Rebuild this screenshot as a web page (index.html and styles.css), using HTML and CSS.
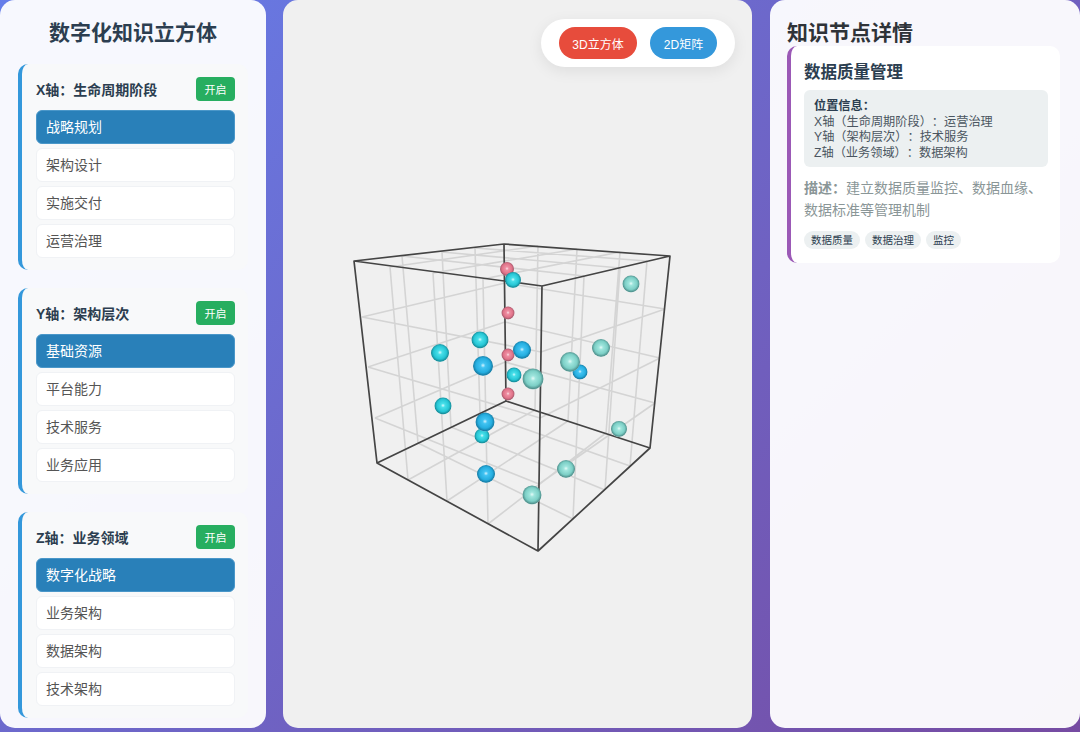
FILE: index.html
```html
<!DOCTYPE html>
<html lang="zh-CN">
<head>
    <meta charset="UTF-8">
    <meta name="viewport" content="width=device-width, initial-scale=1.0">
    <title>数字化知识立方体</title>
    <link rel="stylesheet" href="styles.css">
</head>
<body>
    <div class="container">
        <div class="panel left">
            <h1>数字化知识立方体</h1>
            <div class="axis">
                <div class="axis-head">
                    <span>X轴：生命周期阶段</span>
                    <button class="toggle">开启</button>
                </div>
                <div class="item active">战略规划</div>
                <div class="item">架构设计</div>
                <div class="item">实施交付</div>
                <div class="item">运营治理</div>
            </div>
            <div class="axis">
                <div class="axis-head">
                    <span>Y轴：架构层次</span>
                    <button class="toggle">开启</button>
                </div>
                <div class="item active">基础资源</div>
                <div class="item">平台能力</div>
                <div class="item">技术服务</div>
                <div class="item">业务应用</div>
            </div>
            <div class="axis">
                <div class="axis-head">
                    <span>Z轴：业务领域</span>
                    <button class="toggle">开启</button>
                </div>
                <div class="item active">数字化战略</div>
                <div class="item">业务架构</div>
                <div class="item">数据架构</div>
                <div class="item">技术架构</div>
            </div>
        </div>

        <div class="panel center">
            <svg class="cube" viewBox="283 0 469 728">
                <defs>
                    <radialGradient id="ball-pink" cx="0.5" cy="0.47" r="0.55">
                        <stop offset="0" stop-color="#fbe3e8"/>
                        <stop offset="0.22" stop-color="#ee8ea2"/>
                        <stop offset="0.65" stop-color="#e07389"/>
                        <stop offset="0.88" stop-color="#a85a6e"/>
                        <stop offset="1" stop-color="#d8afba"/>
                    </radialGradient>
                    <radialGradient id="ball-cyan" cx="0.5" cy="0.47" r="0.55">
                        <stop offset="0" stop-color="#d8fbff"/>
                        <stop offset="0.22" stop-color="#48dfe9"/>
                        <stop offset="0.65" stop-color="#26c6d5"/>
                        <stop offset="0.88" stop-color="#178f9c"/>
                        <stop offset="1" stop-color="#96d3d9"/>
                    </radialGradient>
                    <radialGradient id="ball-blue" cx="0.5" cy="0.47" r="0.55">
                        <stop offset="0" stop-color="#d5f3ff"/>
                        <stop offset="0.22" stop-color="#42c3f2"/>
                        <stop offset="0.65" stop-color="#25aee0"/>
                        <stop offset="0.88" stop-color="#177fa8"/>
                        <stop offset="1" stop-color="#96cbe0"/>
                    </radialGradient>
                    <radialGradient id="ball-teal" cx="0.5" cy="0.47" r="0.55">
                        <stop offset="0" stop-color="#e6fbf8"/>
                        <stop offset="0.22" stop-color="#9fe5dd"/>
                        <stop offset="0.65" stop-color="#7ccfc6"/>
                        <stop offset="0.88" stop-color="#529490"/>
                        <stop offset="1" stop-color="#b6d8d4"/>
                    </radialGradient>
                </defs>

                <!-- grid on the six faces -->
                <path class="grid" d="M362 317L541 352M368 367L540 418M375 418L539 484
                    M362 317L505 283M368 367L505 322M375 418L505 362
                    M505 283L665 309M505 322L660 358M505 362L655 403
                    M541 352L665 309M540 418L660 358M539 484L655 403
                    M390 267L408 480M433 273L447 501M483 279L488 524
                    M584 276L573 519M620 268L605 490M647 261L630 466
                    M402 256L418 443M442 252L451 427M475 248L480 413
                    M538 246L535 410M577 249L568 421M620 252L606 433
                    M402 256L584 276M442 252L620 268M475 248L647 261
                    M390 267L538 246M433 273L577 249M483 279L620 252
                    M418 443L573 519M451 427L605 490M480 413L630 466
                    M408 480L535 410M447 501L568 421M488 524L606 433"/>

                <!-- cube edges -->
                <path class="edge" d="M354 261L504 244L670 256L542 286Z
                    M377 463L506 401L650 448L538 551Z
                    M354 261L377 463M504 244L506 401M670 256L650 448M542 286L538 551"/>

                <g class="nodes-pink">
                    <circle cx="507" cy="269" r="7"/>
                    <circle cx="508" cy="313" r="6.5"/>
                    <circle cx="508" cy="355" r="6.5"/>
                    <circle cx="508" cy="394" r="6.5"/>
                </g>
                <g class="nodes-cyan">
                    <circle cx="513" cy="280" r="8"/>
                    <circle cx="480" cy="340" r="8.5"/>
                    <circle cx="440" cy="353" r="9"/>
                    <circle cx="514" cy="375" r="7.5"/>
                    <circle cx="443" cy="406" r="8.5"/>
                    <circle cx="482" cy="436" r="7.5"/>
                </g>
                <g class="nodes-blue">
                    <circle cx="522" cy="350" r="9"/>
                    <circle cx="483" cy="366" r="10"/>
                    <circle cx="580" cy="372" r="7.5"/>
                    <circle cx="485" cy="422" r="9.5"/>
                    <circle cx="486" cy="474" r="9"/>
                </g>
                <g class="nodes-teal">
                    <circle cx="631" cy="284" r="8.5"/>
                    <circle cx="601" cy="348" r="9"/>
                    <circle cx="570" cy="362" r="10"/>
                    <circle cx="533" cy="379" r="10.5"/>
                    <circle cx="619" cy="429" r="8"/>
                    <circle cx="566" cy="469" r="9"/>
                    <circle cx="532" cy="495" r="9.5"/>
                </g>
            </svg>
            <div class="view-switch">
                <button class="view-btn red">3D立方体</button>
                <button class="view-btn blue">2D矩阵</button>
            </div>
        </div>

        <div class="panel right">
            <h2>知识节点详情</h2>
            <div class="detail-card">
                <h3>数据质量管理</h3>
                <div class="position">
                    <strong>位置信息：</strong>
                    <div>X轴（生命周期阶段）：运营治理</div>
                    <div>Y轴（架构层次）：技术服务</div>
                    <div>Z轴（业务领域）：数据架构</div>
                </div>
                <p class="desc"><strong>描述：</strong>建立数据质量监控、数据血缘、数据标准等管理机制</p>
                <div class="tags">
                    <span class="tag">数据质量</span>
                    <span class="tag">数据治理</span>
                    <span class="tag">监控</span>
                </div>
            </div>
        </div>
    </div>
</body>
</html>
```

FILE: styles.css
```css
*{
    margin: 0;
    padding: 0;
    box-sizing: border-box;
    font-family: "Liberation Sans", "Noto Sans CJK JP", sans-serif;
    text-spacing-trim: space-all;
}
body{
    height: 732px;
    overflow: hidden;
    background: linear-gradient(135deg, #667eea, #764ba2);
}
.container{
    display: flex;
    gap: 17px;
    height: 728px;
}
.panel{
    background: rgba(255,255,255,0.95);
    border-radius: 15px;
}
.left{
    width: 266px;
    padding: 18px;
}
.left h1{
    font-size: 21px;
    line-height: 30px;
    color: #2c3e50;
    text-align: center;
    margin-bottom: 16px;
}
.axis{
    height: 206px;
    margin-bottom: 18px;
    padding: 13px 13px 0 14px;
    border-left: 4px solid #3498db;
    border-radius: 10px;
    background: #f8f9fa;
}
.axis-head{
    display: flex;
    align-items: center;
    justify-content: space-between;
    height: 24px;
    margin-bottom: 9px;
    font-size: 14px;
    font-weight: 700;
    color: #2c3e50;
}
.toggle{
    width: 39px;
    height: 24px;
    border: 0;
    border-radius: 4px;
    background: #27ae60;
    color: #fff;
    font-size: 11px;
}
.item{
    height: 34px;
    margin-bottom: 4px;
    padding: 0 9px;
    line-height: 32px;
    font-size: 14px;
    color: #555;
    background: #fff;
    border: 1px solid #f0f2f5;
    border-radius: 6px;
}
.item.active{
    background: #2980b9;
    border-color: #4a97c9;
    color: #fff;
}

.center{
    position: relative;
    width: 469px;
    background: #f0f0f0;
}
.cube{
    display: block;
    width: 100%;
    height: 100%;
}
.grid{
    fill: none;
    stroke: #d4d4d4;
    stroke-width: 1.6;
}
.edge{
    fill: none;
    stroke: #444;
    stroke-width: 1.7;
    stroke-linejoin: round;
}
.nodes-pink{ fill: url(#ball-pink); }
.nodes-cyan{ fill: url(#ball-cyan); }
.nodes-blue{ fill: url(#ball-blue); }
.nodes-teal{ fill: url(#ball-teal); }
.view-switch{
    position: absolute;
    top: 19px;
    right: 17px;
    display: flex;
    gap: 13px;
    padding: 8px 18px;
    background: #fff;
    border-radius: 24px;
    box-shadow: 0 4px 15px rgba(0,0,0,0.08);
}
.view-btn{
    height: 32px;
    border: 0;
    border-radius: 16px;
    color: #fff;
    font-size: 12px;
}
.red{
    width: 78px;
    background: #e74c3c;
}
.blue{
    width: 67px;
    background: #3498db;
}

.right{
    flex: 1;
    margin-left: 1px;
    padding: 19px 20px 0 17px;
}
.right h2{
    font-size: 21px;
    line-height: 27px;
    color: #2f3338;
}
.detail-card{
    height: 217px;
    padding: 15px 12px 0 13px;
    border-left: 4px solid #9b59b6;
    border-radius: 10px;
    background: #fff;
}
.detail-card h3{
    font-size: 16.5px;
    line-height: 22px;
    color: #2c3e50;
    margin-bottom: 7px;
}
.position{
    height: 77px;
    padding: 9px 10px 0;
    background: #ecf0f1;
    border-radius: 6px;
    font-size: 12.2px;
    line-height: 15.7px;
    color: #4a5560;
}
.position strong{
    color: #2c3e50;
}
.desc{
    margin-top: 10px;
    font-size: 14px;
    line-height: 22px;
    color: #8a9697;
}
.tags{
    display: flex;
    gap: 5px;
    margin-top: 10px;
}
.tag{
    height: 18px;
    padding: 0 7px;
    line-height: 18px;
    font-size: 10.5px;
    color: #2c3e50;
    background: #ecf0f1;
    border-radius: 9px;
}
```
